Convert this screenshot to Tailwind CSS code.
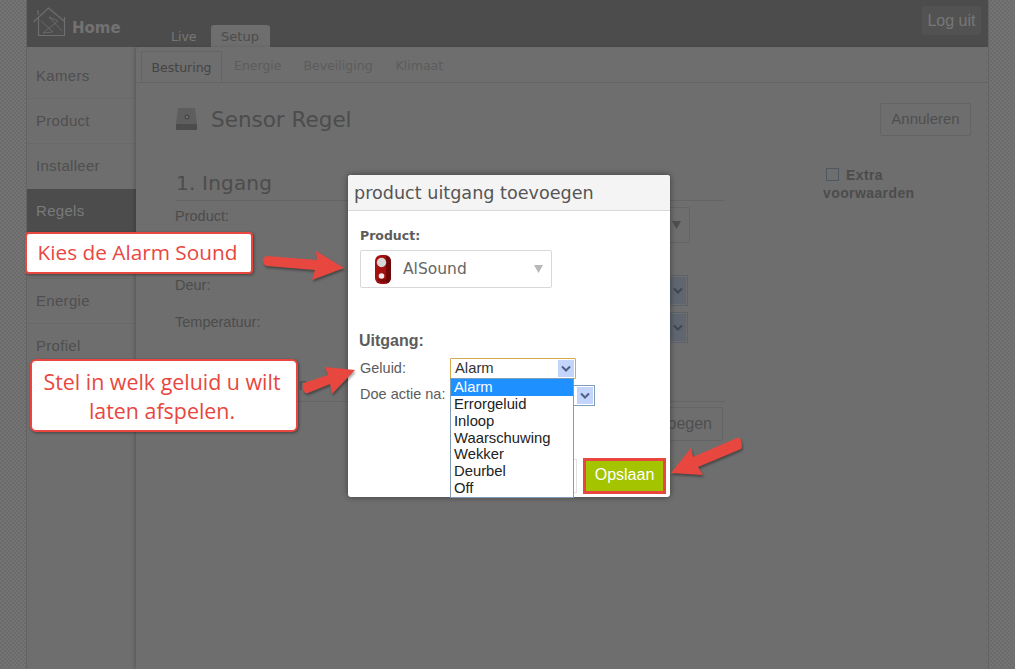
<!DOCTYPE html>
<html lang="en">
<head>
    <meta charset="UTF-8">
    <meta name="viewport" content="width=device-width, initial-scale=1.0">
    <title>Sensor Regel</title>
    <script src="https://cdn.jsdelivr.net/npm/@tailwindcss/browser@4"></script>
</head>
<body class="relative h-[669px] w-[1015px] overflow-hidden bg-[#707070] bg-[repeating-conic-gradient(#6b6b6b_0_25%,#747474_0_50%)] bg-[length:4px_4px] font-['Liberation_Sans',sans-serif]">
    <!-- Dimmed page -->
    <div class="ml-[26px] flex h-full w-[963px] flex-col border-x border-[#636363] bg-[#6e6e6e]">
        <!-- Header -->
        <header class="flex h-[47px] shrink-0 bg-[#4c4c4c]">
            <div class="flex w-[135px] items-start pl-[6px] pt-[7px]">
                <svg class="h-[30px] w-[33px] text-[#6e6e6e]" viewBox="0 0 33 30" fill="none" stroke="currentColor" stroke-width="1.2">
                    <path d="M0.5 15L15.5 1L31 14M5.5 11V28.5H31.5V10M5 3V8"/>
                    <path d="M8 14L20 25L10 26L25 14L16 10L29 24" stroke-width="0.8"/>
                </svg>
                <span class="ml-[6px] mt-[11px] font-['DejaVu_Sans',sans-serif] text-[15px] font-bold leading-5 text-[#727272]">Home</span>
            </div>
            <nav class="flex items-end pl-[9px]">
                <span class="mb-[2px] font-['DejaVu_Sans',sans-serif] text-[12.5px] leading-4 text-[#777777]">Live</span>
                <span class="ml-[14px] flex h-[22px] w-[59px] items-center justify-center rounded-t-[3px] bg-[#6e6e6e] pt-px font-['DejaVu_Sans',sans-serif] text-[13px] text-[#4c4c4c]">Setup</span>
            </nav>
            <button class="ml-auto mr-[7px] mt-[6px] h-[29px] w-[59px] rounded-[2px] bg-[#525252] pt-px text-[16px] text-[#777777]">Log uit</button>
        </header>

        <div class="flex min-h-0 flex-1">
            <!-- Sidebar -->
            <aside class="w-[109px] shrink-0 pt-[7px] text-[15px] tracking-[0.3px] text-[#4f4f4f]">
                <div class="flex h-[45px] items-center border-b border-[#696969] pl-[9px]">Kamers</div>
                <div class="flex h-[45px] items-center border-b border-[#696969] pl-[9px]">Product</div>
                <div class="flex h-[45px] items-center pl-[9px]">Installeer</div>
                <div class="flex h-[45px] items-center bg-[#4c4c4c] pl-[9px] text-[#7a7a7a]">Regels</div>
                <div class="h-[45px] border-b border-[#696969]"></div>
                <div class="flex h-[45px] items-center border-b border-[#696969] pl-[9px]">Energie</div>
                <div class="flex h-[45px] items-center pl-[9px]">Profiel</div>
            </aside>

            <!-- Main panel -->
            <main class="min-w-0 flex-1 rounded-tl-[3px] bg-[#6e6e6e] shadow-[-2px_0_3px_rgba(0,0,0,0.15)]">
                <div class="flex h-[36px] items-end gap-[12px] border-b border-[#646464] pl-[5px] font-['DejaVu_Sans',sans-serif] text-[12.5px] text-[#5c5c5c]">
                    <span class="flex h-[31px] w-[81px] items-center justify-center border border-b-0 border-[#646464] bg-[#6e6e6e] pt-[2px] text-[#444444]">Besturing</span>
                    <span class="mb-[6px]">Energie</span>
                    <span class="mb-[6px] ml-[10px]">Beveiliging</span>
                    <span class="mb-[6px] ml-[11px]">Klimaat</span>
                </div>

                <div class="flex items-start pl-[39px] pr-[17px] pt-[20px]">
                    <div class="w-[689px]">
                        <div class="flex items-center gap-[13px] pt-[4px]">
                            <svg class="h-[24px] w-[23px]" viewBox="0 0 23 24">
                                <path d="M3 1H20L22 17H1Z" fill="#5e5e5e"/>
                                <path d="M1 17H22V23H1Z" fill="#4c4c4c"/>
                                <circle cx="12" cy="10" r="2.5" fill="#4a4a4a"/>
                                <circle cx="12" cy="10" r="1" fill="#7c7c7c"/>
                            </svg>
                            <h1 class="translate-y-px font-['DejaVu_Sans',sans-serif] text-[21.5px] leading-6 text-[#4c4c4c]">Sensor Regel</h1>
                        </div>
                        <h2 class="mt-[40px] w-[550px] border-b border-[#646464] pb-[5px] pl-[1px] font-['DejaVu_Sans',sans-serif] text-[20px] leading-6 tracking-[0.2px] text-[#4c4c4c]">1. Ingang</h2>
                        <div class="mt-[5px] h-[200px] text-[14.5px] text-[#4c4c4c]">
                            <p class="leading-[20px]">Product:</p>
                            <p class="mt-[49px] leading-[20px]">Deur:</p>
                            <p class="mt-[17px] leading-[20px]">Temperatuur:</p>
                        </div>
                    </div>
                    <div class="ml-auto flex w-[148px] flex-col items-end">
                        <button class="h-[33px] w-[91px] rounded-[2px] border border-[#646464] text-[15px] text-[#4e4e4e]">Annuleren</button>
                        <div class="mt-[30px] w-[148px] text-[14px] font-bold leading-[18px] tracking-[0.4px] text-[#4c4c4c]">
                            <span class="ml-[3px] mr-[7px] inline-block h-[13px] w-[13px] translate-y-[1px] border border-[#4f5862]"></span>Extra<br>voorwaarden
                        </div>
                    </div>
                </div>
            </main>
        </div>
    </div>

    <!-- Controls behind the dialog, only their edges show -->
    <div class="absolute left-[660px] top-[207px] flex h-[36px] w-[30px] items-center justify-end rounded-[2px] border border-[#646464] pr-[8px]">
        <svg class="h-[8px] w-[9px]" viewBox="0 0 9 8"><path d="M0 0H9L4.5 8Z" fill="#4e4e4e"/></svg>
    </div>
    <div class="absolute left-[660px] top-[275px] h-[31px] w-[28px] border border-[#5b626b] bg-[#6e6e6e] p-[1px]"><div class="ml-auto flex h-full w-[16px] items-center justify-center bg-[#5f6670]"><svg class="h-[8px] w-[10px]" viewBox="0 0 10 8" fill="none" stroke="#3f4650" stroke-width="2"><path d="M1 1.5L5 5.5L9 1.5"/></svg></div></div>
    <div class="absolute left-[660px] top-[312px] h-[31px] w-[28px] border border-[#5b626b] bg-[#6e6e6e] p-[1px]"><div class="ml-auto flex h-full w-[16px] items-center justify-center bg-[#5f6670]"><svg class="h-[8px] w-[10px]" viewBox="0 0 10 8" fill="none" stroke="#3f4650" stroke-width="2"><path d="M1 1.5L5 5.5L9 1.5"/></svg></div></div>
    <div class="absolute left-[160px] top-[401px] h-px w-[565px] bg-[#646464]"></div>
    <span class="absolute left-[299px] top-[376px] text-[16px] leading-[18px] text-[#4e4e4e]">n</span>
    <div class="absolute left-[640px] top-[407px] flex h-[34px] w-[83px] items-center justify-end rounded-[2px] border border-[#646464] pr-[10px] text-[16px] text-[#4e4e4e]">Toevoegen</div>

    <!-- Dialog -->
    <div class="absolute left-[348px] top-[175px] h-[322px] w-[322px] rounded-[3px] bg-white shadow-[0_0_6px_rgba(0,0,0,0.45)]">
        <div class="flex h-[36px] items-center rounded-t-[3px] border-b border-[#d8d8d8] bg-[#f4f4f4] pl-[6px] pt-px font-['DejaVu_Sans',sans-serif] text-[17.6px] text-[#555555]">product uitgang toevoegen</div>
        <div class="px-[12px] pt-[17px]">
            <p class="font-['DejaVu_Sans',sans-serif] text-[12.5px] font-bold leading-[16px] text-[#5c5c5c]">Product:</p>
            <div class="mt-[6px] flex h-[38px] w-[192px] items-center rounded-[2px] border border-[#d8d8d8] pl-[14px]">
                <svg class="h-[29px] w-[16px] shrink-0" viewBox="0 0 16 29">
                    <rect x="0" y="0" width="16" height="29" rx="6" fill="#a50f0f"/>
                    <path d="M11 0.5Q16 2 16 7V22Q16 27 11 28.5Z" fill="#6e0808"/>
                    <path d="M3 26Q8 29 11 27V24H3Z" fill="#7d0a0a"/>
                    <circle cx="6.5" cy="7.5" r="4.7" fill="#d6d6d6"/>
                    <circle cx="6.5" cy="21" r="2.8" fill="#f3e8e8"/>
                </svg>
                <span class="ml-[12px] pt-px font-['DejaVu_Sans',sans-serif] text-[15.5px] text-[#666666]">AlSound</span>
                <svg class="ml-auto mr-[8px] h-[8px] w-[9px]" viewBox="0 0 9 8"><path d="M0 0H9L4.5 8Z" fill="#b8b8b8"/></svg>
            </div>
            <p class="mt-[44px] -ml-px text-[16px] font-bold leading-[18px] text-[#5c5c5c]">Uitgang:</p>
            <div class="relative mt-[8px] text-[14.5px] leading-[17px] text-[#5c5c5c]">
                <div class="flex items-start">
                    <span class="w-[90px] pt-[2px]">Geluid:</span>
                    <div class="flex h-[21px] w-[126px] items-center rounded-[1px] border border-[#d6a850] pl-[4px] text-[14.8px] text-[#333333]">
                        Alarm
                        <span class="ml-auto mr-[1px] flex h-[17px] w-[16px] items-center justify-center bg-[#c3d5fb]"><svg class="h-[8px] w-[10px]" viewBox="0 0 10 8" fill="none" stroke="#4d6185" stroke-width="2"><path d="M1 1.5L5 5.5L9 1.5"/></svg></span>
                    </div>
                </div>
                <div class="mt-[6px] flex items-start">
                    <span class="w-[90px] pt-px">Doe actie na:</span>
                    <div class="flex h-[21px] w-[145px] items-center justify-end border border-[#7f9db9] pr-[1px]">
                        <span class="flex h-[17px] w-[16px] items-center justify-center bg-[#c3d5fb]"><svg class="h-[8px] w-[10px]" viewBox="0 0 10 8" fill="none" stroke="#4d6185" stroke-width="2"><path d="M1 1.5L5 5.5L9 1.5"/></svg></span>
                    </div>
                </div>
                <!-- Open list -->
                <ul class="absolute left-[90px] top-[20px] w-[124px] border border-[#7f9db9] bg-white text-[14.8px] leading-[16.85px] text-[#222222]">
                    <li class="bg-[#1e90ff] pl-[3px] text-white">Alarm</li>
                    <li class="pl-[3px]">Errorgeluid</li>
                    <li class="pl-[3px]">Inloop</li>
                    <li class="pl-[3px]">Waarschuwing</li>
                    <li class="pl-[3px]">Wekker</li>
                    <li class="pl-[3px]">Deurbel</li>
                    <li class="pl-[3px]">Off</li>
                </ul>
            </div>
        </div>
        <div class="absolute bottom-[3px] right-[4px] flex items-center">
            <span class="mr-[6px] h-[34px] w-[3px] border-y border-r border-[#e2e2e2]"></span>
            <button class="h-[36px] w-[83px] border-[3px] border-[#e8473f] bg-[#a4c400] pb-[2px] text-[16px] text-white">Opslaan</button>
        </div>
    </div>

    <!-- Annotation callouts -->
    <div class="absolute left-[25px] top-[232px] flex h-[42px] w-[228px] items-center justify-center rounded-[4px] border-2 border-[#e8473f] bg-white pr-[3px] font-['Open_Sans',sans-serif] text-[20.8px] text-[#e8473f] shadow-[1px_1px_3px_rgba(0,0,0,0.4)]">Kies de Alarm Sound</div>
    <div class="absolute left-[30px] top-[359px] flex h-[73px] w-[268px] items-center justify-center rounded-[6px] border-2 border-[#e8473f] bg-white pr-[4px] text-center font-['Open_Sans',sans-serif] text-[21.4px] leading-[29px] text-[#e8473f] shadow-[1px_1px_3px_rgba(0,0,0,0.4)]">Stel in welk geluid u wilt<br>laten afspelen.</div>

    <!-- Annotation arrows -->
    <svg class="pointer-events-none absolute left-0 top-0 h-[669px] w-[1015px] drop-shadow-[1px_2px_1px_rgba(0,0,0,0.35)]" viewBox="0 0 1015 669" fill="#e8473f">
        <path d="M267 256L317 260L316 251L344 268L312 280L315 270L267 266Q263 265 263 261Q263 257 267 256Z"/>
        <path d="M304 383L328 375L325 367L355 370L332 394L330 384L308 393Q304 394 303 389Q302 385 304 383Z"/>
        <path d="M737 438L693 457L691 448L671 473L703 475L698 467L741 449Q743 446 741 441Q740 437 737 438Z"/>
    </svg>
</body>
</html>
